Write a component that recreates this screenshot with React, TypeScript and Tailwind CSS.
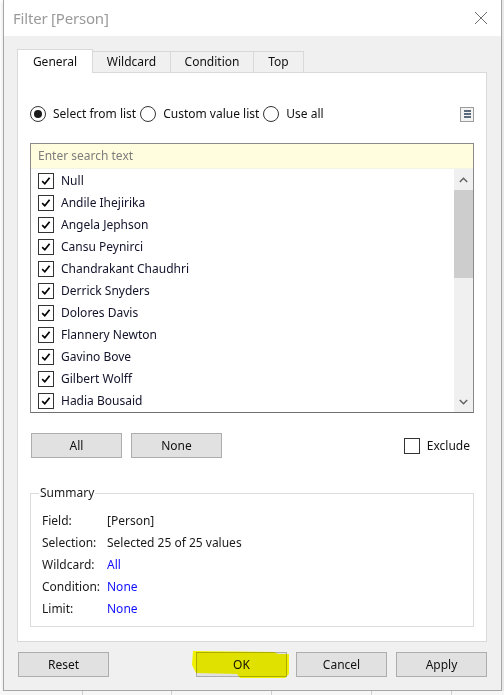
import React from 'react';

const PEOPLE = [
  'Null',
  'Andile Ihejirika',
  'Angela Jephson',
  'Cansu Peynirci',
  'Chandrakant Chaudhri',
  'Derrick Snyders',
  'Dolores Davis',
  'Flannery Newton',
  'Gavino Bove',
  'Gilbert Wolff',
  'Hadia Bousaid',
];

const TABS = [
  { label: 'General', w: 'w-[76px]' },
  { label: 'Wildcard', w: 'w-[79px]' },
  { label: 'Condition', w: 'w-[84px]' },
  { label: 'Top', w: 'w-[51px]' },
];

function CheckBox({ checked }: { checked: boolean }) {
  return (
    <div className="w-[16px] h-[16px] shrink-0 border border-[#333] bg-white flex items-center justify-center">
      {checked && (
        <svg width="14" height="14" viewBox="0 0 14 14">
          <path d="M3.2 7.2 L5.8 9.8 L10.6 3.8" fill="none" stroke="#000" strokeWidth="1.7" />
        </svg>
      )}
    </div>
  );
}

function Radio({ checked, label }: { checked: boolean; label: string }) {
  return (
    <div className="flex items-center gap-[7px]">
      <div className="w-[16px] h-[16px] rounded-full border border-[#333] bg-white flex items-center justify-center">
        {checked && <div className="w-[8px] h-[8px] rounded-full bg-[#1a1a1a]" />}
      </div>
      <span>{label}</span>
    </div>
  );
}

function Button({ label, w = 'w-[91px]' }: { label: string; w?: string }) {
  return (
    <button className={`${w} h-[25px] bg-[#e1e1e1] border border-[#adadad] text-[#111] flex items-center justify-center`}>
      {label}
    </button>
  );
}

function SummaryRow({ label, value, blue }: { label: string; value: string; blue?: boolean }) {
  return (
    <div className="h-[22px] flex items-center">
      <span className="w-[65px] text-[#1a1a1a]">{label}</span>
      <span className={blue ? 'text-[#1010ff]' : 'text-[#1a1a1a]'}>{value}</span>
    </div>
  );
}

export default function App() {
  return (
    <div className="w-[504px] h-[695px] overflow-hidden bg-white flex flex-col font-['Segoe_UI','Noto_Sans',sans-serif] text-[12px] leading-none select-none">
      <div className="flex h-[691px]">
        <div className="w-[3px] bg-white" />

        {/* dialog */}
        <div className="w-[499px] flex flex-col border-x border-b border-[#a6a6a6] shadow-[0_2px_4px_rgba(0,0,0,0.15)]">
          <div className="h-[36px] bg-white flex items-center pl-[9px] pr-[13px]">
            <span className="text-[15px] text-[#9a9a9a] tracking-[-0.2px]">Filter [Person]</span>
            <svg className="ml-auto" width="14" height="14" viewBox="0 0 14 14">
              <path d="M1 1 L13 13 M13 1 L1 13" stroke="#6f6f6f" strokeWidth="1" />
            </svg>
          </div>

          <div className="flex-1 bg-[#f0f0f0] pt-[13px] pl-[13px] pr-[14px] pb-[13px] flex flex-col">
            {/* tabs */}
            <div className="flex items-end h-[24px] -mb-px relative">
              {TABS.map((t, i) =>
                i === 0 ? (
                  <div key={t.label} className={`${t.w} h-[24px] bg-white border border-b-0 border-[#d9d9d9] flex items-center justify-center text-[#111]`}>
                    {t.label}
                  </div>
                ) : (
                  <div key={t.label} className={`${t.w} h-[22px] -ml-px bg-[#f0f0f0] border border-[#d9d9d9] flex items-center justify-center text-[#111]`}>
                    {t.label}
                  </div>
                )
              )}
            </div>

            {/* tab pane */}
            <div className="bg-white border border-[#d9d9d9] pt-[33px] px-[12px] pb-[14px] flex flex-col">
              <div className="flex items-center h-[16px] gap-[4px] text-[#111]">
                <Radio checked label="Select from list" />
                <Radio checked={false} label="Custom value list" />
                <Radio checked={false} label="Use all" />
                <div className="ml-auto w-[14px] h-[15px] border border-[#9c9c9c] bg-[#f3f3f3] flex flex-col items-center justify-center gap-px">
                  <div className="w-[7px] h-[2px] bg-[#5c6b7c]" />
                  <div className="w-[7px] h-[2px] bg-[#5c6b7c]" />
                  <div className="w-[7px] h-[2px] bg-[#5c6b7c]" />
                </div>
              </div>

              {/* list box */}
              <div className="mt-[21px] h-[270px] border border-[#8a8a8a] border-b-[#707070] flex flex-col">
                <div className="h-[25px] bg-[#fffddd] border-b border-[#f3f3e6] flex items-center pl-[7px] text-[#7d7d7d]">
                  Enter search text
                </div>
                <div className="flex-1 flex">
                  <div className="flex-1 flex flex-col pt-px">
                    {PEOPLE.map((p) => (
                      <div key={p} className="h-[22px] flex items-center gap-[7px] pl-[7px] text-[#12122a]">
                        <CheckBox checked />
                        <span>{p}</span>
                      </div>
                    ))}
                  </div>
                  <div className="w-[19px] bg-[#f0f0f0] flex flex-col items-center">
                    <div className="h-[21px] flex items-center justify-center">
                      <svg width="9" height="6" viewBox="0 0 9 6">
                        <path d="M0.8 5 L4.5 1.2 L8.2 5" fill="none" stroke="#606060" strokeWidth="1.4" />
                      </svg>
                    </div>
                    <div className="w-[19px] h-[88px] bg-[#cdcdcd]" />
                    <div className="flex-1" />
                    <div className="h-[21px] flex items-center justify-center">
                      <svg width="9" height="6" viewBox="0 0 9 6">
                        <path d="M0.8 1 L4.5 4.8 L8.2 1" fill="none" stroke="#606060" strokeWidth="1.4" />
                      </svg>
                    </div>
                  </div>
                </div>
              </div>

              {/* all / none / exclude */}
              <div className="mt-[20px] flex items-center pl-px text-[#111]">
                <div className="flex gap-[9px]">
                  <Button label="All" />
                  <Button label="None" />
                </div>
                <div className="ml-auto mr-[4px] flex items-center gap-[7px]">
                  <CheckBox checked={false} />
                  <span>Exclude</span>
                </div>
              </div>

              {/* summary */}
              <fieldset className="mt-[29px] border border-[#dcdcdc] pl-[11px] pt-[11px] pb-[6px]">
                <legend className="ml-[-3px] px-[1px] text-[#1a1a1a]">Summary</legend>
                <SummaryRow label="Field:" value="[Person]" />
                <SummaryRow label="Selection:" value="Selected 25 of 25 values" />
                <SummaryRow label="Wildcard:" value="All" blue />
                <SummaryRow label="Condition:" value="None" blue />
                <SummaryRow label="Limit:" value="None" blue />
              </fieldset>
            </div>

            {/* dialog buttons */}
            <div className="mt-[10px] flex items-center pl-px">
              <Button label="Reset" />
              <div className="ml-auto flex gap-[9px]">
                <div className="relative">
                  <Button label="OK" />
                  <svg className="absolute -left-[4px] -top-[2px] mix-blend-multiply pointer-events-none" width="98" height="29" viewBox="0 0 98 29">
                    <path d="M1 1 L82 2 L86 4 L97 4 L97 24 L93 28 L48 28 L45 24 L4 23 L0 15 Z" fill="#ffff00" />
                  </svg>
                </div>
                <Button label="Cancel" />
                <Button label="Apply" />
              </div>
            </div>
          </div>
        </div>

        <div className="flex-1 bg-[#e8e8e8]" />
      </div>

      {/* background sheet behind the dialog */}
      <div className="flex-1 flex bg-[#f7f7f7]">
        <div className="w-[83px] border-r border-[#cfcfcf]" />
        <div className="w-[89px] border-r border-[#cfcfcf]" />
        <div className="w-[100px] border-r border-[#cfcfcf]" />
        <div className="w-[100px] border-r border-[#cfcfcf]" />
        <div className="w-[80px] border-r border-[#cfcfcf]" />
        <div className="flex-1" />
      </div>
    </div>
  );
}
